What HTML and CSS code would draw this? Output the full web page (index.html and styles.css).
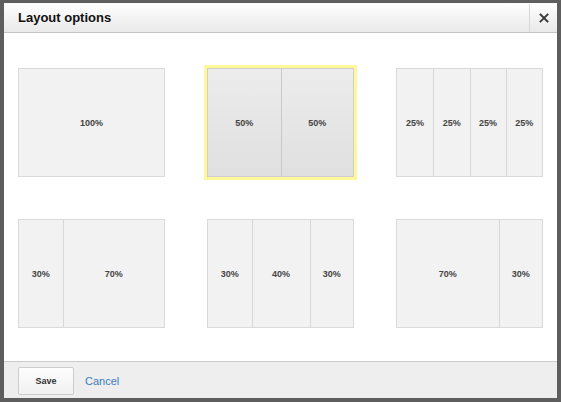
FILE: index.html
```html
<!DOCTYPE html>
<html>
<head>
<meta charset="utf-8">
<link rel="stylesheet" href="styles.css">
</head>
<body>
<div class="dialog">
  <div class="titlebar">
    <div class="title">Layout options</div>
    <div class="close">
      <svg width="10" height="10" viewBox="0 0 10 10"><path d="M1.5 1.5 L8.5 8.5 M8.5 1.5 L1.5 8.5" stroke="#3a3a3a" stroke-width="1.9" stroke-linecap="square"/></svg>
    </div>
  </div>
  <div class="content">
    <div class="grid">
      <div class="card"><div class="col w100">100%</div></div>
      <div class="card selected"><div class="col w50">50%</div><div class="col w50">50%</div></div>
      <div class="card"><div class="col w25">25%</div><div class="col w25">25%</div><div class="col w25">25%</div><div class="col w25">25%</div></div>
      <div class="card"><div class="col w30">30%</div><div class="col w70">70%</div></div>
      <div class="card"><div class="col w30">30%</div><div class="col w40">40%</div><div class="col w30">30%</div></div>
      <div class="card"><div class="col w70">70%</div><div class="col w30">30%</div></div>
    </div>
  </div>
  <div class="footer">
    <button class="save">Save</button>
    <a class="cancel" href="#">Cancel</a>
  </div>
</div>
</body>
</html>
```
FILE: styles.css
```css
html, body {
  margin: 0;
  padding: 0;
}
body {
  width: 561px;
  height: 402px;
  box-sizing: border-box;
  background: #5e5e5e;
  padding: 3px 4px 4px 4px;
  font-family: "Liberation Sans", Arial, sans-serif;
}
.dialog {
  background: #fff;
  height: 395px;
  display: flex;
  flex-direction: column;
}
.titlebar {
  height: 30px;
  box-sizing: border-box;
  display: flex;
  align-items: stretch;
  background: linear-gradient(#fefefe, #e9e9e9);
  border-bottom: 1px solid #c4c4c4;
  border-top: 1px solid #fafafa;
}
.title {
  flex: 1;
  padding-left: 14px;
  font-size: 13px;
  font-weight: bold;
  color: #111;
  line-height: 28px;
}
.close {
  width: 27px;
  border-left: 1px solid #d6d6d6;
  display: flex;
  align-items: center;
  justify-content: center;
}
.content {
  flex: 1;
  padding: 35px 14px 0 14px;
}
.grid {
  display: grid;
  grid-template-columns: repeat(3, 147px);
  justify-content: space-between;
  row-gap: 42px;
}
.card {
  height: 109px;
  box-sizing: border-box;
  border: 1px solid #dadada;
  background: #f2f2f2;
  display: flex;
}
.card.selected {
  background: linear-gradient(#ececec, #e0e0e0);
  border-color: #cfcfcf;
  outline: 3px solid #fff799;
}
.col {
  display: flex;
  align-items: center;
  justify-content: center;
  font-size: 9px;
  font-weight: bold;
  color: #444;
  box-sizing: border-box;
}
.col + .col {
  border-left: 1px solid #d8d8d8;
}
.selected .col + .col {
  border-left-color: #c8c8c8;
}
.w100 { flex: 0 0 100%; }
.w50 { flex: 0 0 50%; }
.w25 { flex: 0 0 25%; }
.w30 { flex: 0 0 30%; }
.w40 { flex: 0 0 40%; }
.w70 { flex: 0 0 70%; }
.footer {
  height: 37px;
  box-sizing: border-box;
  border-top: 1px solid #cbcbcb;
  background: #eeeeee;
  display: flex;
  align-items: center;
  padding: 0 14px;
}
.save {
  width: 56px;
  height: 28px;
  border: 1px solid #cdcdcd;
  border-radius: 2px;
  background: linear-gradient(#fdfdfd, #f1f1f1);
  font-family: "Liberation Sans", Arial, sans-serif;
  font-size: 9px;
  font-weight: bold;
  color: #333;
  padding: 0;
  margin-top: 2px;
}
.cancel {
  margin-left: 11px;
  margin-top: 2px;
  font-size: 11px;
  color: #3b7dbd;
  text-decoration: none;
}
```
